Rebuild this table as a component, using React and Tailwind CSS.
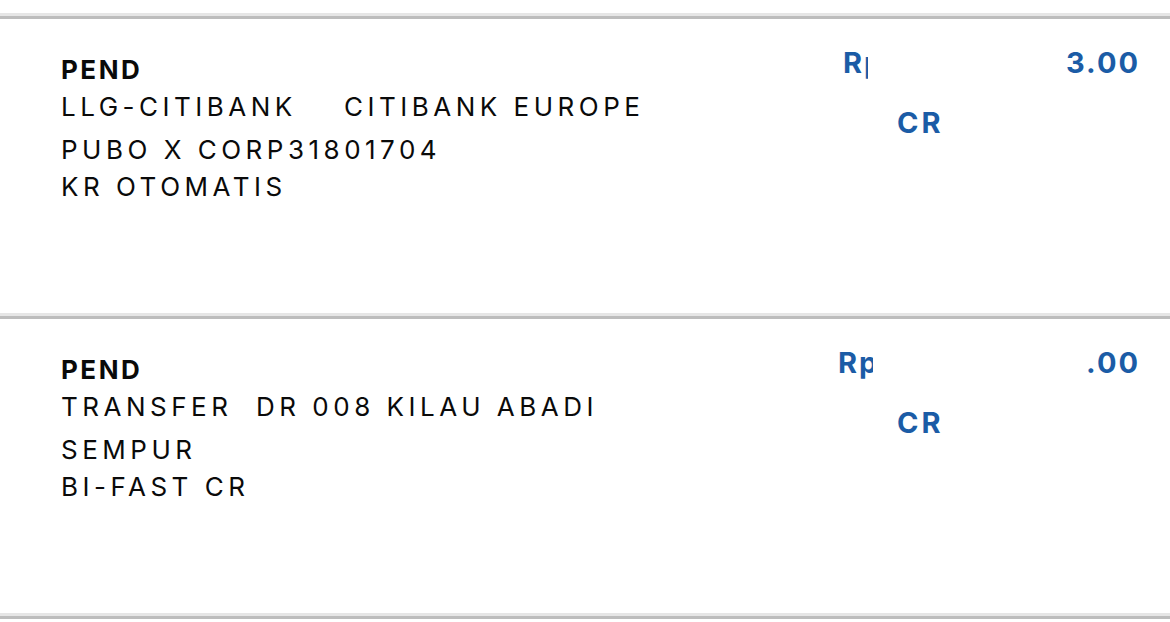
const rows = [
  {
    status: 'PEND',
    lines: ['LLG-CITIBANK    CITIBANK EUROPE', 'PUBO X CORP31801704', 'KR OTOMATIS'],
    rpClass: 'w-[25px] ml-[55px]',
    tail: '3.00',
  },
  {
    status: 'PEND',
    lines: ['TRANSFER  DR 008 KILAU ABADI', 'SEMPUR', 'BI-FAST CR'],
    rpClass: 'w-[35px] ml-[50px]',
    tail: '.00',
  },
];

function Divider() {
  return (
    <div>
      <div className="h-[3px] bg-[#e6e6e6]" />
      <div className="h-[3px] bg-[#bdbdbd]" />
    </div>
  );
}

function TxRow({ row }) {
  return (
    <div className="flex h-[294px] bg-white">
      <div className="flex-1 pl-[61px] pt-[32px] text-[26px] text-[#0a0a0a] font-['Inter',sans-serif]">
        <div className="font-bold tracking-[2.5px] leading-[37px]">{row.status}</div>
        <div className="whitespace-pre tracking-[4.5px] leading-[37px]">{row.lines[0]}</div>
        <div className="mt-1.5 whitespace-pre tracking-[4.5px] leading-[37px]">{row.lines[1]}</div>
        <div className="whitespace-pre tracking-[4.5px] leading-[37px]">{row.lines[2]}</div>
      </div>
      <div className="w-[350px] mr-[32px] pt-[26px] font-['Inter',sans-serif] font-bold text-[29px] text-[#1b5ca6]">
        <div className="flex items-center justify-between leading-[36px]">
          <span className={`${row.rpClass} overflow-hidden whitespace-nowrap tracking-[2px]`}>Rp</span>
          <span className="tracking-[2px] -mr-[2px]">{row.tail}</span>
        </div>
        <div className="mt-[24px] ml-[109px] leading-[36px] tracking-[3px]">CR</div>
      </div>
    </div>
  );
}

export default function App() {
  return (
    <div className="w-[1170px] h-[622px] overflow-hidden bg-white">
      <div className="h-[13px]" />
      <Divider />
      <TxRow row={rows[0]} />
      <Divider />
      <TxRow row={rows[1]} />
      <Divider />
    </div>
  );
}
